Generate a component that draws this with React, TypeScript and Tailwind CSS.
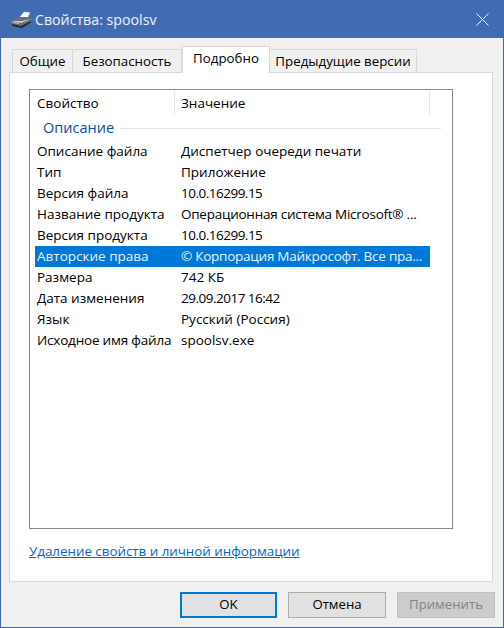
const rows = [
  ['Описание файла', 'Диспетчер очереди печати'],
  ['Тип', 'Приложение'],
  ['Версия файла', '10.0.16299.15'],
  ['Название продукта', 'Операционная система Microsoft® ...'],
  ['Версия продукта', '10.0.16299.15'],
  ['Авторские права', '© Корпорация Майкрософт. Все пра...'],
  ['Размера', '742 КБ'],
  ['Дата изменения', '29.09.2017 16:42'],
  ['Язык', 'Русский (Россия)'],
  ['Исходное имя файла', 'spoolsv.exe'],
];

function PrinterIcon() {
  return (
    <svg width="22" height="18" viewBox="0 0 22 18">
      <path d="M9 7 L14 1 L20 1.5 L17 8 Z" fill="#f6f6f6" stroke="#cfd3d8" strokeWidth="0.5" />
      <path d="M1 10 L7 6 L17 6 L21 8 L21 11 L12 16 L2 15 Z" fill="#6a6f76" />
      <path d="M1 10 L11 12 L21 8 L12 10 Z" fill="#c9ccd0" />
      <path d="M2 13 L11 15 L21 10 L21 11.5 L12 17 L2 15 Z" fill="#26292d" />
      <path d="M3 11 L9 12 L9 13 L3 12 Z" fill="#9fd0e8" />
    </svg>
  );
}

function Tab({ label, active, width }: { label: string; active?: boolean; width: string }) {
  if (active) {
    return (
      <div className={`${width} relative z-10 -mb-px h-[27px] bg-white border border-b-0 border-[#d9d9d9] flex items-center justify-center pb-[2px]`}>
        {label}
      </div>
    );
  }
  return (
    <div className={`${width} h-[23px] bg-[#f0f0f0] border border-b-0 border-[#d9d9d9] -ml-px first:ml-0 flex items-center justify-center pt-[2px]`}>
      {label}
    </div>
  );
}

export default function App() {
  return (
    <div
      className="w-[504px] h-[628px] flex flex-col border border-[#3f69b0] bg-[#f0f0f0] text-[13.5px] text-black overflow-hidden"
      style={{ fontFamily: '"Open Sans", "Noto Sans", sans-serif' }}
    >
      {/* Title bar */}
      <div className="h-[37px] shrink-0 bg-[#416cb2] flex items-center pl-[9px] pr-[14px] text-white">
        <PrinterIcon />
        <span className="ml-[3px] text-[14.2px] text-[#eef2f8]">Свойства: spoolsv</span>
        <svg className="ml-auto" width="13" height="13" viewBox="0 0 13 13">
          <path d="M0.5 0.5 L12.5 12.5 M12.5 0.5 L0.5 12.5" stroke="#fff" strokeWidth="1" />
        </svg>
      </div>

      {/* Tabs */}
      <div className="h-[34px] shrink-0 flex items-end pl-[11px] text-[13.3px]">
        <Tab label="Общие" width="w-[61px]" />
        <Tab label="Безопасность" width="w-[110px]" />
        <Tab label="Подробно" active width="w-[88px]" />
        <Tab label="Предыдущие версии" width="w-[148px]" />
      </div>

      {/* Panel */}
      <div className="ml-[8px] w-[484px] h-[510px] shrink-0 bg-white border border-[#d9d9d9] pt-[16px] pl-[19px] flex flex-col">
        <div className="w-[424px] h-[440px] shrink-0 border border-[#828790] pt-[1px] pl-[5px]">
          <div className="h-[24px] flex items-center">
            <div className="w-[140px] h-full pl-[2px] pt-[1px] flex items-center border-r border-[#e5e5e5]">Свойство</div>
            <div className="w-[255px] h-full pl-[6px] pt-[1px] flex items-center border-r border-[#e5e5e5]">Значение</div>
          </div>
          <div className="h-[26px] flex items-center pl-[8px] pr-[11px] gap-[6px]">
            <span className="text-[14.5px] text-[#0a4ea8]">Описание</span>
            <div className="flex-1 h-px bg-[#dde5f0]" />
          </div>
          <div className="flex flex-col">
            {rows.map(([name, value], i) => (
              <div
                key={name}
                className={`w-[395px] h-[21px] flex items-center ${i === 5 ? 'bg-[#0078d7] text-[#e8f2fb]' : ''}`}
              >
                <div className={`w-[146px] pl-[2px] whitespace-nowrap ${i === 9 ? 'tracking-[-0.2px]' : ''}`}>{name}</div>
                <div className={`whitespace-nowrap ${i === 2 || i === 4 || i === 7 ? 'tracking-[-0.5px]' : i === 3 || i === 5 ? 'tracking-[-0.25px]' : ''}`}>{value}</div>
              </div>
            ))}
          </div>
        </div>
        <div className="mt-[12px]">
          <a className="text-[13.35px] text-[#0066cc] underline">Удаление свойств и личной информации</a>
        </div>
      </div>

      {/* Buttons */}
      <div className="flex justify-end gap-[11px] pt-[10px] pr-[8px] text-[13.2px]">
        <button className="w-[97px] h-[26px] bg-[#e1e1e1] border-2 border-[#0078d7]">OK</button>
        <button className="w-[98px] h-[26px] bg-[#e1e1e1] border border-[#adadad]">Отмена</button>
        <button className="w-[98px] h-[26px] bg-[#cccccc] border border-[#bfbfbf] text-[#838383]">Применить</button>
      </div>
    </div>
  );
}
